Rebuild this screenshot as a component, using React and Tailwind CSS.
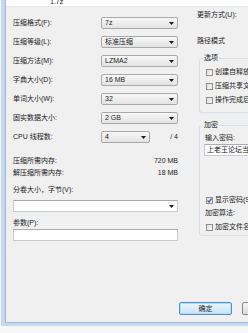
import React from "react";

const Arrow = () => (
  <svg width="5" height="3" viewBox="0 0 5 3" className="shrink-0">
    <path d="M0 0h5L2.5 3z" fill="#1a1a1a" />
  </svg>
);

function Dd({ v, className = "w-[77px]" }) {
  return (
    <div
      className={
        "h-[12px] shrink-0 flex items-center justify-between pl-[3px] pr-[3px] border border-[#a9a9a9] rounded-[2px] bg-linear-to-b from-[#f8f8f8] to-[#e3e3e3] " +
        className
      }
    >
      <span className="leading-[10px]">{v}</span>
      <Arrow />
    </div>
  );
}

function Row({ label, v }) {
  return (
    <div className="flex items-center justify-between h-[12px]">
      <span>{label}</span>
      <Dd v={v} />
    </div>
  );
}

function Cb({ checked, label }) {
  return (
    <div className="flex items-center h-[10px] gap-[2px]">
      <span className="w-[7px] h-[7px] shrink-0 border border-[#8e8f8f] bg-linear-to-br from-[#dcdcdc] to-[#fbfbfb] flex items-center justify-center">
        {checked && (
          <svg width="5" height="5" viewBox="0 0 5 5">
            <path d="M0.5 2.6L2 4L4.6 0.6" stroke="#2c4f8a" strokeWidth="1.2" fill="none" />
          </svg>
        )}
      </span>
      <span className="whitespace-nowrap">{label}</span>
    </div>
  );
}

export default function App() {
  return (
    <div className="w-[248px] h-[333px] overflow-hidden bg-[#f6f7f9] pl-[1px] pb-[7px] text-[7px] leading-[10px] text-[#222] font-['Liberation_Sans','Noto_Sans_CJK_SC',sans-serif]">
      <div className="h-full bg-[#c6d9ef] pl-[4px] pb-[3px]">
        <div className="h-full border-l border-b border-[#9fb7d4] bg-[#f0f0f0] overflow-hidden">
          {/* archive name field (cropped) */}
          <div className="h-[7px] bg-white border-b border-[#e3e7ec] pl-[44px] overflow-hidden">
            <div className="-mt-[2px] leading-[7px]">1.7z</div>
          </div>

          <div className="flex pl-[7px]">
            {/* left column */}
            <div className="w-[165px] shrink-0 flex flex-col">
              <div className="mt-[10px] flex flex-col gap-[7px]">
                <Row label="压缩格式(F):" v="7z" />
                <Row label="压缩等级(L):" v="标准压缩" />
                <Row label="压缩方法(M):" v="LZMA2" />
                <Row label="字典大小(D):" v="16 MB" />
                <Row label="单词大小(W):" v="32" />
                <Row label="固实数据大小:" v="2 GB" />
                <div className="flex items-center h-[12px]">
                  <span className="w-[88px] shrink-0">CPU 线程数:</span>
                  <Dd v="4" className="w-[49px]" />
                  <span className="flex-1 text-right">/ 4</span>
                </div>
              </div>
              <div className="mt-[12px] flex items-center justify-between h-[12px]">
                <span>压缩所需内存:</span>
                <span>720 MB</span>
              </div>
              <div className="flex items-center justify-between h-[12px]">
                <span>解压缩所需内存:</span>
                <span>18 MB</span>
              </div>
              <div className="mt-[6px] h-[10px]">分卷大小，字节(V):</div>
              <div className="mt-[5px] h-[12px] bg-white border border-[#c5ccd5] border-t-[#abadb3] flex items-center justify-end pr-[3px]">
                <Arrow />
              </div>
              <div className="mt-[6px] h-[10px]">参数(P):</div>
              <div className="mt-[1px] h-[12px] bg-white border border-[#c5ccd5] border-t-[#abadb3]" />
            </div>

            {/* right column */}
            <div className="ml-[19px] w-[90px] shrink-0 flex flex-col">
              <div className="mt-[3px] h-[10px] whitespace-nowrap">更新方式(U):</div>
              <div className="mt-[16px] h-[10px] whitespace-nowrap">路径模式</div>

              <fieldset className="mt-[7px] ml-[2px] border border-[#d5dfe5] rounded-[3px] pl-[6px] pt-[4px] pb-[7px]">
                <legend className="-ml-[3px] px-[1px] h-[10px] leading-[10px]">选项</legend>
                <div className="flex flex-col gap-[4px]">
                  <Cb label="创建自释放程序" />
                  <Cb label="压缩共享文件" />
                  <Cb label="操作完成后删除源文件" />
                </div>
              </fieldset>

              <fieldset className="mt-[7px] ml-[2px] border border-[#d5dfe5] rounded-[3px] pl-[5px] pt-[3px] pb-[3px]">
                <legend className="-ml-[2px] px-[1px] h-[10px] leading-[10px]">加密</legend>
                <div className="h-[10px] whitespace-nowrap">输入密码:</div>
                <div className="mt-[1px] -ml-[1px] h-[12px] bg-white border border-[#c5ccd5] border-t-[#abadb3] pl-[2px] flex items-center whitespace-nowrap">
                  上老王论坛当家做主
                </div>
                <div className="mt-[39px] ml-[1px]">
                  <Cb checked label="显示密码(S)" />
                </div>
                <div className="mt-[3px] h-[10px] whitespace-nowrap">加密算法:</div>
                <div className="mt-[4px] ml-[1px]">
                  <Cb label="加密文件名(N)" />
                </div>
              </fieldset>
            </div>
          </div>

          {/* buttons */}
          <div className="mt-[61px] pl-[173px] flex gap-[10px]">
            <div className="w-[53px] h-[13px] shrink-0 rounded-[2px] border border-[#4f94c8] bg-linear-to-b from-[#ecf6fd] to-[#c7e3f5] shadow-[inset_0_0_0_1px_#b5dcf4] flex items-center justify-center">
              确定
            </div>
            <div className="w-[53px] h-[13px] shrink-0 rounded-[2px] border border-[#8a8a8a] bg-linear-to-b from-[#f4f4f4] to-[#dcdcdc] flex items-center justify-center">
              取消
            </div>
          </div>
        </div>
      </div>
    </div>
  );
}
